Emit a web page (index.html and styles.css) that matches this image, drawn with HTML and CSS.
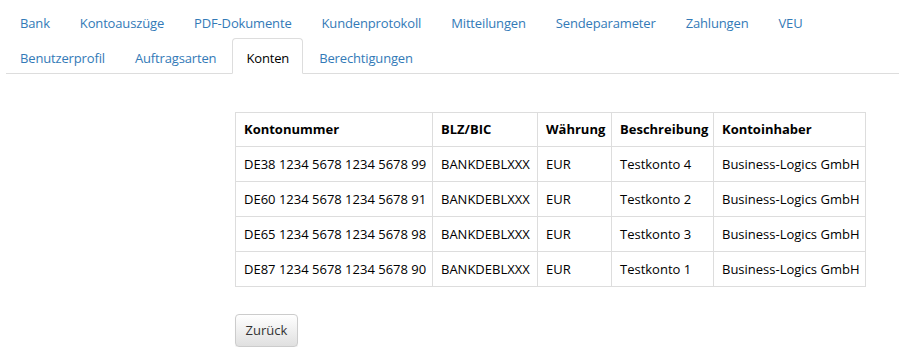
FILE: index.html
```html
<!DOCTYPE html>
<html lang="de">

<head>
  <meta charset="UTF-8" />
  <title>Konten</title>
  <link rel="stylesheet" href="styles.css">
</head>

<body>
  <div class="page">
    <!-- Reiter -->
    <ul class="nav-tabs">
      <li><a href="#">Bank</a></li>
      <li><a href="#">Kontoauszüge</a></li>
      <li><a href="#">PDF-Dokumente</a></li>
      <li><a href="#">Kundenprotokoll</a></li>
      <li><a href="#">Mitteilungen</a></li>
      <li><a href="#">Sendeparameter</a></li>
      <li><a href="#">Zahlungen</a></li>
      <li><a href="#">VEU</a></li>
      <li class="break"></li>
      <li><a href="#">Benutzerprofil</a></li>
      <li><a href="#">Auftragsarten</a></li>
      <li class="active"><a href="#">Konten</a></li>
      <li><a href="#">Berechtigungen</a></li>
    </ul>

    <div class="content">
      <table class="accounts">
        <colgroup>
          <col class="c-iban">
          <col class="c-bic">
          <col class="c-cur">
          <col class="c-desc">
          <col class="c-owner">
        </colgroup>
        <thead>
          <tr>
            <th>Kontonummer</th>
            <th>BLZ/BIC</th>
            <th>Währung</th>
            <th>Beschreibung</th>
            <th>Kontoinhaber</th>
          </tr>
        </thead>
        <tbody>
          <tr>
            <td>DE38 1234 5678 1234 5678 99</td>
            <td>BANKDEBLXXX</td>
            <td>EUR</td>
            <td>Testkonto 4</td>
            <td>Business-Logics GmbH</td>
          </tr>
          <tr>
            <td>DE60 1234 5678 1234 5678 91</td>
            <td>BANKDEBLXXX</td>
            <td>EUR</td>
            <td>Testkonto 2</td>
            <td>Business-Logics GmbH</td>
          </tr>
          <tr>
            <td>DE65 1234 5678 1234 5678 98</td>
            <td>BANKDEBLXXX</td>
            <td>EUR</td>
            <td>Testkonto 3</td>
            <td>Business-Logics GmbH</td>
          </tr>
          <tr>
            <td>DE87 1234 5678 1234 5678 90</td>
            <td>BANKDEBLXXX</td>
            <td>EUR</td>
            <td>Testkonto 1</td>
            <td>Business-Logics GmbH</td>
          </tr>
        </tbody>
      </table>

      <button class="btn">Zurück</button>
    </div>
  </div>
</body>

</html>
```

FILE: styles.css
```css
body {
  margin: 0;
  background: #fff;
  color: #000;
  font-family: "Open Sans", "Noto Sans", sans-serif;
  font-size: 13px;
  line-height: 20px;
}

.page {
  padding: 3px 9px 0 6px;
}

/* Reiter */
.nav-tabs {
  display: flex;
  flex-wrap: wrap;
  margin: 0;
  padding: 0;
  list-style: none;
  border-bottom: 1px solid #ddd;
}

.nav-tabs li {
  margin: 0 2px -1px 0;
}

.nav-tabs li.break {
  flex-basis: 100%;
  height: 0;
  margin: 0;
}

.nav-tabs a {
  display: block;
  padding: 9px 13px 5px;
  border: 1px solid transparent;
  border-radius: 4px 4px 0 0;
  color: #337ab7;
  text-decoration: none;
  letter-spacing: -0.15px;
}

.nav-tabs li.active a {
  color: #000;
  background: #fff;
  border-color: #ddd #ddd transparent;
}

/* Inhalt */
.content {
  padding: 38px 0 0 229px;
}

.accounts {
  border-collapse: collapse;
  table-layout: fixed;
  width: 631px;
}

.c-iban { width: 197px; }
.c-bic { width: 105px; }
.c-cur { width: 74px; }
.c-desc { width: 102px; }
.c-owner { width: 152px; }

.accounts th,
.accounts td {
  padding: 7px 8px;
  border: 1px solid #ddd;
  text-align: left;
  white-space: nowrap;
  overflow: hidden;
}

.accounts th {
  padding: 6px 8px 7px;
  font-weight: bold;
}

.btn {
  display: block;
  width: 63px;
  margin-top: 27px;
  padding: 6px 0;
  font-family: inherit;
  font-size: 13px;
  line-height: 19px;
  color: #333;
  text-align: center;
  border: 1px solid #ccc;
  border-radius: 4px;
  background: linear-gradient(to bottom, #fff 0%, #e0e0e0 100%);
  box-shadow: inset 0 1px 0 rgba(255, 255, 255, .15), 0 1px 1px rgba(0, 0, 0, .075);
  cursor: pointer;
}
```
